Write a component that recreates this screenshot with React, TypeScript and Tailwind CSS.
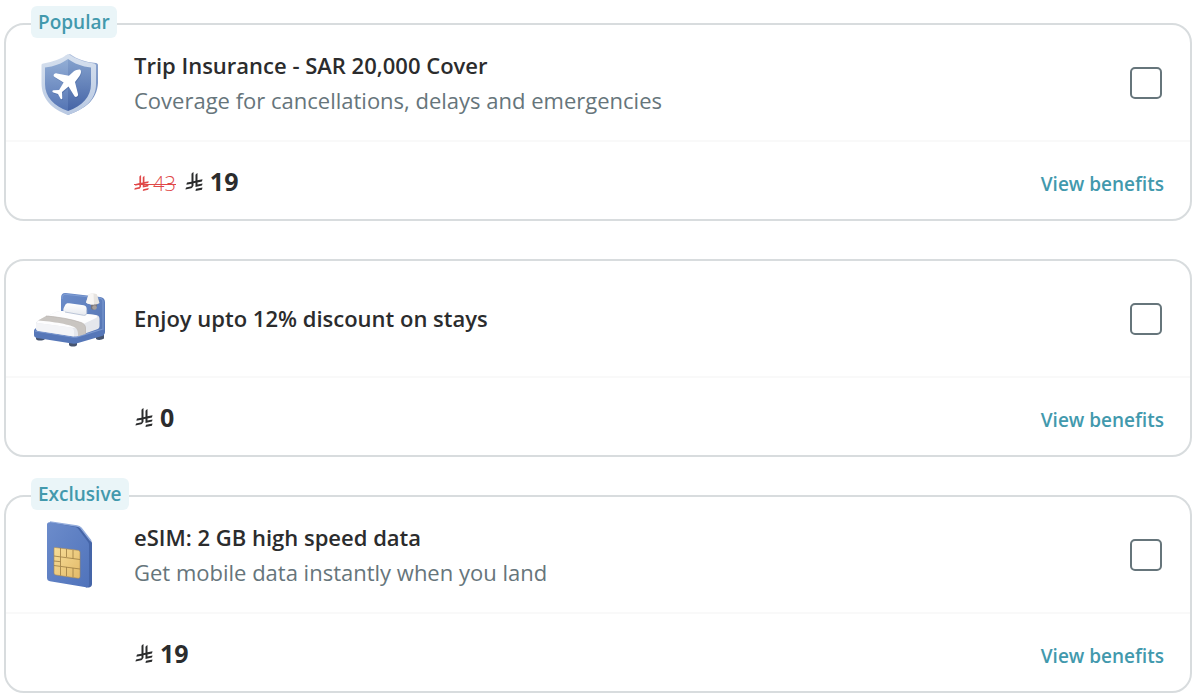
import type { ReactNode } from 'react'

function RiyalIcon({ className }: { className: string }) {
  return (
    <svg viewBox="0 0 1124.14 1256.39" fill="currentColor" aria-label="SAR" role="img" className={className}>
      <path d="M699.62,1113.02h0c-20.06,44.48-33.32,92.75-38.4,143.37l424.51-90.24c20.06-44.47,33.31-92.75,38.4-143.37l-424.51,90.24Z" />
      <path d="M1085.73,895.8c20.06-44.47,33.32-92.75,38.4-143.37l-330.68,70.33v-135.2l292.27-62.11c20.06-44.47,33.32-92.75,38.4-143.37l-330.68,70.27V66.13c-50.67,28.45-95.67,66.32-132.25,110.99v403.35l-132.25,28.11V0c-50.67,28.44-95.67,66.32-132.25,110.99v525.69l-295.91,62.88c-20.06,44.47-33.33,92.75-38.42,143.37l334.33-71.05v170.26l-358.3,76.14c-20.06,44.47-33.32,92.75-38.4,143.37l375.04-79.7c30.53-6.35,56.77-24.4,73.83-49.24l68.78-101.97v-.02c7.14-10.55,11.3-23.27,11.3-36.97v-149.98l132.25-28.11v270.4l424.53-90.28Z" />
    </svg>
  )
}

function ShieldIcon() {
  return (
    <svg viewBox="0 0 80 80" className="size-20 shrink-0" aria-hidden="true">
      <defs>
        <linearGradient id="shield-edge" x1="0" y1="0" x2="1" y2="1">
          <stop offset="0" stopColor="#b9c8e2" />
          <stop offset="1" stopColor="#6483bb" />
        </linearGradient>
        <linearGradient id="shield-rim" x1="0" y1="0" x2="0" y2="1">
          <stop offset="0" stopColor="#d6e0ee" />
          <stop offset="1" stopColor="#b9c9e2" />
        </linearGradient>
        <linearGradient id="shield-left" x1="0" y1="0" x2="0" y2="1">
          <stop offset="0" stopColor="#93aed5" />
          <stop offset="1" stopColor="#5474b4" />
        </linearGradient>
        <linearGradient id="shield-right" x1="0" y1="0" x2="0" y2="1">
          <stop offset="0" stopColor="#84a1cd" />
          <stop offset="1" stopColor="#4564a6" />
        </linearGradient>
      </defs>
      <path d="M40 11c7 5 15 8 26 9 1 0 2 1 2 2v18c-1 17-13 26-30 32l-3-2V13Z" fill="url(#shield-edge)" />
      <path d="M38 11c8 5 16 8 26 9.500 1 0 2 1 2 2V41c0 16-11 25-28 31C22 66 11.500 56 11.500 40V22.500c0-1 0-2 2-2C23 19 31 16 38 11Z" fill="url(#shield-rim)" />
      <path d="M38 16c-6 4.500-14 7.500-23 8.500V41c0 13 9 22 23 27Z" fill="url(#shield-left)" />
      <path d="M38 16c6 4.500 14 7.500 23 8.500V41c0 13-9 22-23 27Z" fill="url(#shield-right)" />
      <path
        d="M51 28c1 1 .5 4-1 6l-4.500 6 3 12c.3 1-.2 2-1 2.500-1.200.8-2.300.3-2.800-.8L39 44.500l-6.500 5.500.3 6c0 1.500-1.500 1.500-2 .3L28.500 52l-4.700-1.500c-1.300-.5-1.200-2 .3-2.200l5.500-.3 4.500-7.500-9-5.500c-1.200-.8-1.300-2-.4-2.900.8-.7 1.600-.9 2.700-.6l12 2.300 5-4.500C46.500 28 50 27 51 28Z"
        fill="#35548f"
        opacity=".35"
      />
      <path
        d="M50.500 27c1 1 .5 4-1 6L45 39l3 12c.3 1-.2 2-1 2.500-1.200.8-2.300.3-2.800-.8L38.500 43.500 32 49l.3 6c0 1.500-1.500 1.500-2 .3L28 51l-4.700-1.500c-1.300-.5-1.200-2 .3-2.200l5.500-.3 4.500-7.500-9-5.500c-1.200-.8-1.300-2-.4-2.900.8-.7 1.600-.9 2.700-.6l12 2.300 5-4.500C46 27 49.500 26 50.500 27Z"
        fill="#fff"
      />
    </svg>
  )
}

function BedIcon() {
  return (
    <svg viewBox="0 -1 80 80" className="size-20 shrink-0" aria-hidden="true">
      <defs>
        <linearGradient id="bed-head" x1="0" y1="0" x2="1" y2="1">
          <stop offset="0" stopColor="#6c8dca" />
          <stop offset="1" stopColor="#5474b3" />
        </linearGradient>
        <linearGradient id="bed-pillow" x1="0" y1="0" x2="0" y2="1">
          <stop offset="0" stopColor="#fff" />
          <stop offset="1" stopColor="#e6e9ef" />
        </linearGradient>
      </defs>
      {/* feet */}
      <path d="M6 56v3c1 2 7 2 9 0v-3ZM39 61v4c1 2 7 2 8 0v-4ZM66 54v5c2 1.500 6 1 8-.5V54Z" fill="#46546f" />
      {/* headboard */}
      <path d="M31 36V18c0-4 2-5.500 5-5l34 4c3 .5 5 2 5 5v30c0 2-1 3-3 3L31 42Z" fill="url(#bed-head)" />
      <path d="M32 19c0-4 2-5 5-4.500L69 18c3 .3 4 2 4 4v30" fill="none" stroke="#87a3d7" strokeWidth=".8" />
      {/* frame */}
      <path d="M4 52c0-3 1-4 4-4l63 1c2 0 3 1 3 2v3c0 1-1 2-2 2L48 63c-2 .8-4 .8-6 .5L7 58c-2-.3-3-1.500-3-3Z" fill="#5677b8" />
      <path d="M5 51l37 6c2 .3 4 .3 6-.4L73 49" fill="none" stroke="#7b98cf" strokeWidth="1.200" />
      {/* mattress */}
      <path d="M6 44c0-2 1-3 3-4l17-8c2-1 4-1 6-1l34 4c2.500.3 3.500 2 3.500 4v7c0 2-1 3-3 3.500L48 56c-2 .6-4 .7-6 .3L9 51c-2-.3-3-1-3-3Z" fill="#e5e7ec" />
      <path d="M7 43c0-1.500 1-2.500 2-3l17-8c2-1 4-1 6-1l33 4c2 .3 3 2 1 3L47 47c-2 .9-3.500 1-6 .6Z" fill="#fdfdfe" />
      <path d="M7 43l34 4.600c2 .4 3 2 3 4v4.700c-1 0-2 0-3-.2L9 51c-2-.3-3-1-3-3v-3c0-1 0-2 1-2Z" fill="#f3f4f7" />
      {/* throw */}
      <path d="M8 40.500l8-4.500c11 .8 25 3 35 6.500 3 1 4.500 3 4.500 5.500v6l-7.500 2.200c.2-3 0-6-2-8C42 44.500 22 41.500 8 40.500Z" fill="#c9c5c1" />
      <path d="M16 36c11 .8 25 3 35 6.500 3 1 4.500 3 4.500 5.500v6" fill="none" stroke="#b7b2ae" strokeWidth=".7" />
      {/* pillow */}
      <path d="M35 32c-2-.4-2-2-1.300-4l1.500-3c.7-1.500 2-2 4-1.700l14.500 1.900c2 .3 3 2 3 4v3.500c0 2-1.500 2.800-3 2.600Z" fill="url(#bed-pillow)" />
      <path d="M35 32l18.700 3.300c1.800.3 3-.8 3-2.600v-3" fill="none" stroke="#b4bfd4" strokeWidth=".9" />
      {/* lamp */}
      <path d="M61 23h6v3l-3 4-3-1Z" fill="#77747c" />
      <circle cx="64.500" cy="27.500" r="2.300" fill="#a69f9b" />
      <path d="M58.500 14.500c2-1.300 7-1.300 8.500 0l2.500 8.500c-3 2.200-10.500 2-13.500-.5Z" fill="#e7e4e0" />
      <path d="M58.500 14.500c1.500-1 4-1 5-.5l.5 10.500c-3 .2-6-.5-8-2Z" fill="#f8f6f4" />
    </svg>
  )
}

function SimIcon() {
  return (
    <svg viewBox="0 -1 80 80" className="size-20 shrink-0" aria-hidden="true">
      <defs>
        <linearGradient id="sim-face" x1="0" y1="0" x2="1" y2="1">
          <stop offset="0" stopColor="#6c8ccb" />
          <stop offset="1" stopColor="#5073bb" />
        </linearGradient>
        <linearGradient id="sim-chip" x1="0" y1="0" x2="1" y2="1">
          <stop offset="0" stopColor="#f7dd98" />
          <stop offset="1" stopColor="#e3ba68" />
        </linearGradient>
      </defs>
      <path d="M20 6l27 4c2 .3 3 1 4 2l10 13c1 1 1 2 1 3v40c0 2-1 3-3 3.500h-3Z" fill="#4565a8" />
      <path d="M20 6l27 4c2 .3 3 1 4 2l10 13" fill="none" stroke="#93acdc" strokeWidth="1.500" />
      <path d="M17 9c0-2 1-3 3-2.700L45 11c1.500.3 2.500 1 3.300 2L58 26c.8 1 1 2 1 3v39.500c0 2-1 3-3 2.700l-36-6c-2-.3-3-1.500-3-3.500Z" fill="url(#sim-face)" />
      <path d="M25 31.500l23 2.800c1.300.2 2 1 2 2.200v24c0 1.300-.8 2-2 1.800l-22-3.300c-1.300-.2-2-1-2-2.200V32.500c0-.7.3-1 1-1Z" fill="url(#sim-chip)" stroke="#a98a55" strokeWidth=".6" />
      <path
        d="M30.500 32v8.500M36.500 33v8M43 34v8.500M24 40l26 3.500M24 45l6.500.7M30.500 40.500V50M24 49.500l26 3.500M30.500 50.500v9M36.500 51v9M43 52v9"
        fill="none"
        stroke="#9c7c42"
        strokeWidth=".8"
      />
    </svg>
  )
}

type AddOn = {
  id: string
  badge?: string
  icon: ReactNode
  title: string
  description?: string
  oldPrice?: string
  price: string
}

const addOns: AddOn[] = [
  {
    id: 'insurance',
    badge: 'Popular',
    icon: <ShieldIcon />,
    title: 'Trip Insurance - SAR 20,000 Cover',
    description: 'Coverage for cancellations, delays and emergencies',
    oldPrice: '43',
    price: '19',
  },
  {
    id: 'stays',
    icon: <BedIcon />,
    title: 'Enjoy upto 12% discount on stays',
    price: '0',
  },
  {
    id: 'esim',
    badge: 'Exclusive',
    icon: <SimIcon />,
    title: 'eSIM: 2 GB high speed data',
    description: 'Get mobile data instantly when you land',
    price: '19',
  },
]

function AddOnCard({ id, badge, icon, title, description, oldPrice, price }: AddOn) {
  return (
    <section className="relative rounded-[20px] border-2 border-[#d8dcde] bg-white">
      {badge && (
        <span className="absolute -top-[19px] left-[25px] rounded-md bg-[#eaf5f8] px-[7px] text-[19px] leading-8 font-semibold text-[#4299ad]">
          {badge}
        </span>
      )}

      <div className="flex min-h-[117px] items-center gap-6 border-b-2 border-[#f9f9f9] pr-7 pl-6">
        {icon}
        <label htmlFor={id} className="grow">
          <span className="block text-[22px] leading-[35px] font-semibold text-[#2b2c2d]">{title}</span>
          {description && <span className="block text-[22px] leading-[35px] text-[#66757b]">{description}</span>}
        </label>
        <input
          id={id}
          type="checkbox"
          className="size-8 shrink-0 appearance-none rounded-[5px] border-2 border-[#66757b] bg-white checked:bg-[#4299ad]"
        />
      </div>

      <div className="flex items-baseline justify-between pt-[21px] pr-[26px] pb-[17px] pl-32">
        <div className="flex items-baseline gap-2">
          {oldPrice && (
            <s className="relative flex items-baseline gap-1 text-xl font-light text-[#e04848] no-underline after:absolute after:inset-x-0 after:top-1/2 after:h-px after:bg-[#e04848]">
              <RiyalIcon className="h-4 w-[15px]" />
              {oldPrice}
            </s>
          )}
          <span className="flex items-baseline gap-1.5 text-[25px] leading-9 font-bold text-[#2b2c2d]">
            <RiyalIcon className="h-[19px] w-5" />
            {price}
          </span>
        </div>
        <a href="#benefits" className="text-[19px] leading-9 font-semibold text-[#4299ad]">
          View benefits
        </a>
      </div>
    </section>
  )
}

export default function App() {
  return (
    <main className="flex flex-col gap-[38px] bg-white px-1 pt-[23px] pr-2 font-['Open_Sans',sans-serif]">
      {addOns.map((addOn) => (
        <AddOnCard key={addOn.id} {...addOn} />
      ))}
    </main>
  )
}
